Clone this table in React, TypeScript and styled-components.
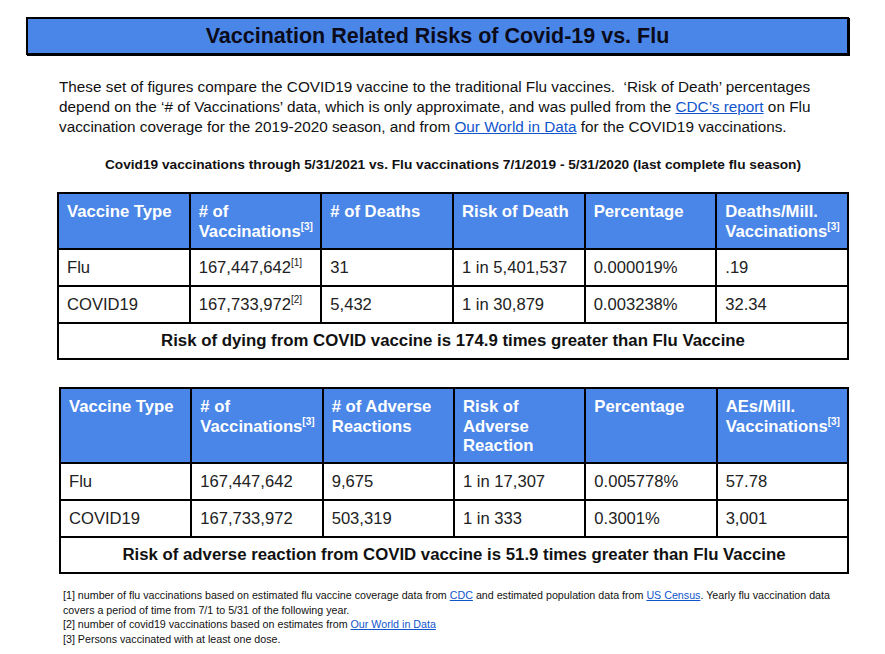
import styled, { createGlobalStyle } from "styled-components";

const GlobalStyle = createGlobalStyle`
  html, body {
    margin: 0;
    padding: 0;
    background: #ffffff;
  }
  body {
    font-family: "Liberation Sans", Arial, sans-serif;
    color: #000;
  }
`;

const Page = styled.div`
  width: 885px;
  height: 654px;
  padding: 17px 36px 0 26px;
  box-sizing: border-box;
  overflow: hidden;
`;

const TitleBar = styled.div`
  height: 38px;
  box-sizing: border-box;
  background: #4a86e8;
  border: 2px solid #000;
  box-shadow: 1px 1px 0 #000;
  display: flex;
  align-items: center;
  justify-content: center;
`;

const Title = styled.h1`
  margin: 0;
  font-size: 21.5px;
  font-weight: bold;
  color: #0b0b1a;
`;

const Intro = styled.p`
  margin: 22px 0 0 33px;
  font-size: 15.3px;
  line-height: 20px;
  color: #111;
  white-space: nowrap;
`;

const Link = styled.a`
  color: #1155cc;
  text-decoration: underline;
`;

const Caption = styled.div`
  margin: 20px 0 0 31px;
  text-align: center;
  font-size: 13.7px;
  font-weight: bold;
  color: #111;
`;

const Table = styled.table<{ $left: number; $top: number }>`
  margin: ${(p) => p.$top}px 0 0 ${(p) => p.$left}px;
  width: calc(100% - ${(p) => p.$left}px);
  border-collapse: collapse;
  table-layout: fixed;
  border: 2px solid #000;
`;

const HeadCell = styled.th<{ $h: number }>`
  height: ${(p) => p.$h}px;
  box-sizing: border-box;
  background: #4a86e8;
  color: #fff;
  font-size: 16.7px;
  font-weight: bold;
  line-height: 19.5px;
  text-align: left;
  vertical-align: top;
  padding: 8px 8px 0 8px;
  border: 2px solid #000;
`;

const Cell = styled.td`
  height: 37px;
  box-sizing: border-box;
  font-size: 16.6px;
  color: #222;
  padding: 0 8px;
  border: 2px solid #000;
`;

const Summary = styled.td`
  height: 36px;
  box-sizing: border-box;
  text-align: center;
  font-size: 16.8px;
  font-weight: bold;
  color: #111;
  border: 2px solid #000;
`;

const Sup = styled.sup`
  font-size: 10px;
  line-height: 0;
  vertical-align: 7px;
`;

const Notes = styled.div`
  margin: 14px 0 0 37px;
  font-size: 10.7px;
  line-height: 14.5px;
  color: #111;
  white-space: nowrap;
`;

type Row = { type: string; vax: string; note?: string; a: string; b: string; c: string; d: string };

const deathHeads = ["Vaccine Type", "# of Vaccinations", "# of Deaths", "Risk of Death", "Percentage", "Deaths/Mill. Vaccinations"];
const aeHeads = ["Vaccine Type", "# of Vaccinations", "# of Adverse Reactions", "Risk of Adverse Reaction", "Percentage", "AEs/Mill. Vaccinations"];

const deathRows: Row[] = [
  { type: "Flu", vax: "167,447,642", note: "[1]", a: "31", b: "1 in 5,401,537", c: "0.000019%", d: ".19" },
  { type: "COVID19", vax: "167,733,972", note: "[2]", a: "5,432", b: "1 in 30,879", c: "0.003238%", d: "32.34" },
];

const aeRows: Row[] = [
  { type: "Flu", vax: "167,447,642", a: "9,675", b: "1 in 17,307", c: "0.005778%", d: "57.78" },
  { type: "COVID19", vax: "167,733,972", a: "503,319", b: "1 in 333", c: "0.3001%", d: "3,001" },
];

function Heads({ labels, h }: { labels: string[]; h: number }) {
  return (
    <tr>
      {labels.map((l, i) => (
        <HeadCell key={l} $h={h}>
          {l}
          {(i === 1 || i === 5) && <Sup>[3]</Sup>}
        </HeadCell>
      ))}
    </tr>
  );
}

function RiskTable({ heads, rows, headH, summary, left, top }: {
  heads: string[]; rows: Row[]; headH: number; summary: string; left: number; top: number;
}) {
  return (
    <Table $left={left} $top={top}>
      <colgroup>
        {heads.map((h) => <col key={h} />)}
      </colgroup>
      <tbody>
        <Heads labels={heads} h={headH} />
        {rows.map((r) => (
          <tr key={r.type}>
            <Cell>{r.type}</Cell>
            <Cell>{r.vax}{r.note && <Sup>{r.note}</Sup>}</Cell>
            <Cell>{r.a}</Cell>
            <Cell>{r.b}</Cell>
            <Cell>{r.c}</Cell>
            <Cell>{r.d}</Cell>
          </tr>
        ))}
        <tr>
          <Summary colSpan={6}>{summary}</Summary>
        </tr>
      </tbody>
    </Table>
  );
}

export default function App() {
  return (
    <>
      <GlobalStyle />
      <Page>
        <TitleBar>
          <Title>Vaccination Related Risks of Covid-19 vs. Flu</Title>
        </TitleBar>
        <Intro>
          These set of figures compare the COVID19 vaccine to the traditional Flu vaccines.&nbsp; ‘Risk of Death’ percentages
          <br />
          depend on the ‘# of Vaccinations’ data, which is only approximate, and was pulled from the{" "}
          <Link href="#">CDC’s report</Link> on Flu
          <br />
          vaccination coverage for the 2019-2020 season, and from{" "}
          <Link href="#">Our World in Data</Link> for the COVID19 vaccinations.
        </Intro>
        <Caption>
          Covid19 vaccinations through 5/31/2021 vs. Flu vaccinations 7/1/2019 - 5/31/2020 (last complete flu season)
        </Caption>
        <RiskTable
          heads={deathHeads}
          rows={deathRows}
          headH={56}
          summary="Risk of dying from COVID vaccine is 174.9 times greater than Flu Vaccine"
          left={31}
          top={20}
        />
        <RiskTable
          heads={aeHeads}
          rows={aeRows}
          headH={75}
          summary="Risk of adverse reaction from COVID vaccine is 51.9 times greater than Flu Vaccine"
          left={33}
          top={27}
        />
        <Notes>
          [1] number of flu vaccinations based on estimated flu vaccine coverage data from <Link href="#">CDC</Link> and
          estimated population data from <Link href="#">US Census</Link>. Yearly flu vaccination data
          <br />
          covers a period of time from 7/1 to 5/31 of the following year.
          <br />
          [2] number of covid19 vaccinations based on estimates from <Link href="#">Our World in Data</Link>
          <br />
          [3] Persons vaccinated with at least one dose.
        </Notes>
      </Page>
    </>
  );
}
